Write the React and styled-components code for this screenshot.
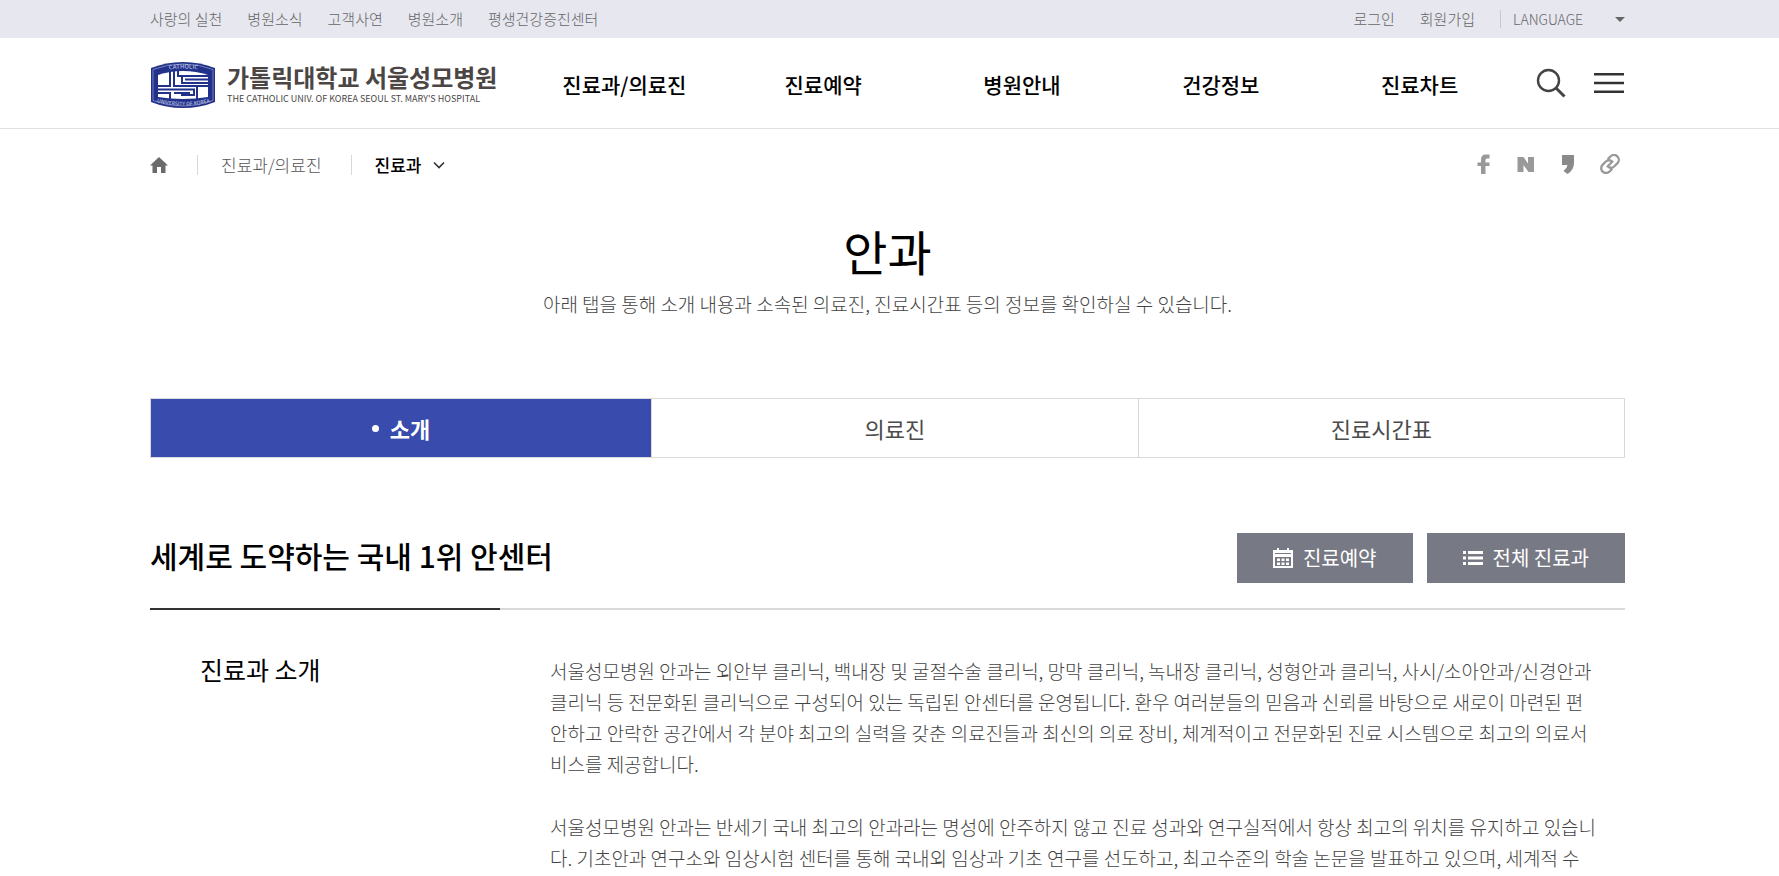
import React from "react";
import styled, { createGlobalStyle } from "styled-components";

const GlobalStyle = createGlobalStyle`
  * {
    box-sizing: border-box;
  }
  body {
    margin: 0;
    background: #fff;
    color: #000;
    font-family: "Noto Sans CJK KR", "Noto Sans", sans-serif;
    font-weight: 300;
  }
  a {
    color: inherit;
    text-decoration: none;
  }
  h1, h2, h3, p, ul {
    margin: 0;
    padding: 0;
  }
  button, select {
    font-family: inherit;
  }
`;

const Inner = styled.div`
  padding: 0 154px 0 150px;
`;

// Top bar
const TopBar = styled.div`
  background-color: #e6e7ef;
`;

const TopRow = styled(Inner)`
  display: flex;
  justify-content: space-between;
  align-items: center;
  height: 38px;
  font-size: 15px;
  line-height: 38px;
  color: #666;
`;

const TopLinks = styled.nav`
  display: flex;
  align-items: center;
  gap: 25px;
`;

const LanguageBox = styled.label`
  display: flex;
  align-items: center;
  height: 18px;
  padding-left: 12px;
  border-left: 1px solid #c8c8cc;
`;

const LanguageSelect = styled.select`
  appearance: none;
  width: 102px;
  padding: 0;
  border: 0;
  background: none;
  color: #666;
  font-size: 14px;
  font-weight: 300;
`;

const Caret = styled.span`
  border: 5px solid transparent;
  border-top-color: #666;
  border-bottom: 0;
`;

// Header
const Header = styled.header`
  border-bottom: 1px solid #e1e1e1;
`;

const HeaderRow = styled(Inner)`
  display: flex;
  align-items: center;
  height: 90px;
`;

const Logo = styled.a`
  display: flex;
  align-items: center;
  gap: 11px;
  flex: 0 0 375px;
  padding-top: 3px;
`;

const LogoText = styled.span`
  display: flex;
  flex-direction: column;
  gap: 2px;
  color: #4b4644;
`;

const LogoName = styled.strong`
  font-size: 24px;
  font-weight: 700;
  line-height: 26px;
  white-space: nowrap;
`;

const LogoSub = styled.span`
  font-size: 9px;
  font-weight: 400;
  line-height: 14px;
  white-space: nowrap;
`;

const MainNav = styled.nav`
  display: flex;
  flex: 1;
  padding-top: 2px;
`;

const NavLink = styled.a`
  flex: 1;
  text-align: center;
  font-size: 21px;
  font-weight: 500;
  line-height: 32px;
  white-space: nowrap;
`;

const Tools = styled.div`
  display: flex;
  align-items: center;
  justify-content: flex-end;
  gap: 28px;
  flex: 0 0 106px;
  padding-right: 1px;
`;

const IconButton = styled.button`
  display: flex;
  padding: 0;
  border: 0;
  background: none;
  cursor: pointer;
`;

// Breadcrumb
const PathRow = styled(Inner)`
  display: flex;
  justify-content: space-between;
  align-items: center;
  height: 72px;
`;

const Path = styled.nav`
  display: flex;
  align-items: center;
  font-size: 17px;
  line-height: 24px;
`;

const PathItem = styled.a`
  display: flex;
  align-items: center;
  gap: 12px;
  color: ${({ $current }) => ($current ? "#000" : "#555")};
  font-weight: ${({ $current }) => ($current ? 500 : 300)};
`;

const Divider = styled.span`
  width: 1px;
  height: 20px;
  margin: 0 23px 0 29px;
  background-color: #d8d8d8;
`;

const Social = styled.div`
  display: flex;
  align-items: center;
  gap: 22px;
  padding: 0 5px 2px 0;
`;

// Title
const TitleBox = styled(Inner)`
  display: flex;
  flex-direction: column;
  align-items: center;
  gap: 2px;
  padding-top: 14px;
  padding-bottom: 77px;
`;

const Title = styled.h1`
  font-size: 48px;
  font-weight: 400;
  line-height: 70px;
`;

const Subtitle = styled.p`
  font-size: 19px;
  line-height: 34px;
  color: #444;
`;

// Tabs
const Tabs = styled.div`
  display: flex;
  height: 60px;
  border: 1px solid #d9d9d9;
`;

const Tab = styled.button`
  display: flex;
  align-items: center;
  justify-content: center;
  gap: 11px;
  flex: ${({ $active }) => ($active ? 34 : 33)} 1 0;
  padding: 0;
  border: 0;
  border-right: 1px solid #d9d9d9;
  background-color: ${({ $active }) => ($active ? "#394bac" : "#fff")};
  color: ${({ $active }) => ($active ? "#fff" : "#4b4b4b")};
  font-size: 22px;
  font-weight: ${({ $active }) => ($active ? 700 : 400)};
  line-height: 32px;
  cursor: pointer;
  &:last-child {
    border-right: 0;
  }
`;

const Dot = styled.span`
  width: 7px;
  height: 7px;
  border-radius: 50%;
  background-color: #fff;
`;

// Section
const SectionHead = styled.div`
  display: flex;
  justify-content: space-between;
  align-items: flex-start;
  padding: 75px 0 25px;
`;

const SectionTitle = styled.h2`
  font-size: 30px;
  font-weight: 500;
  line-height: 44px;
`;

const Buttons = styled.div`
  display: flex;
  gap: 14px;
`;

const GrayButton = styled.button`
  display: flex;
  align-items: center;
  gap: 10px;
  height: 50px;
  padding: 0 36px;
  border: 0;
  background-color: #777984;
  color: #fff;
  font-size: 20px;
  font-weight: 400;
  line-height: 28px;
  cursor: pointer;
`;

const Line = styled.div`
  height: 2px;
  background-color: #d9d9d9;
`;

const LineAccent = styled.div`
  width: 350px;
  height: 2px;
  background-color: #333;
`;

const Article = styled.section`
  display: flex;
  padding-top: 45px;
`;

const ArticleTitle = styled.h3`
  flex: 0 0 400px;
  padding-left: 50px;
  font-size: 25px;
  font-weight: 400;
  line-height: 29px;
`;

const ArticleBody = styled.div`
  display: flex;
  flex-direction: column;
  flex: 1;
  gap: 32px;
  padding-right: 28px;
  font-size: 19px;
  line-height: 31px;
  color: #444;
`;

const PageClip = styled.div`
  height: 100vh;
  overflow: hidden;
`;

const topLinks = ["사랑의 실천", "병원소식", "고객사연", "병원소개", "평생건강증진센터"];
const navLinks = ["진료과/의료진", "진료예약", "병원안내", "건강정보", "진료차트"];
const tabs = ["소개", "의료진", "진료시간표"];
const paragraphs = [
  "서울성모병원 안과는 외안부 클리닉, 백내장 및 굴절수술 클리닉, 망막 클리닉, 녹내장 클리닉, 성형안과 클리닉, 사시/소아안과/신경안과 클리닉 등 전문화된 클리닉으로 구성되어 있는 독립된 안센터를 운영됩니다. 환우 여러분들의 믿음과 신뢰를 바탕으로 새로이 마련된 편안하고 안락한 공간에서 각 분야 최고의 실력을 갖춘 의료진들과 최신의 의료 장비, 체계적이고 전문화된 진료 시스템으로 최고의 의료서비스를 제공합니다.",
  "서울성모병원 안과는 반세기 국내 최고의 안과라는 명성에 안주하지 않고 진료 성과와 연구실적에서 항상 최고의 위치를 유지하고 있습니다. 기초안과 연구소와 임상시험 센터를 통해 국내외 임상과 기초 연구를 선도하고, 최고수준의 학술 논문을 발표하고 있으며, 세계적 수",
];

function Emblem() {
  return (
    <svg width="66" height="48" viewBox="0 0 66 48" aria-hidden="true">
      <path d="M1 7Q16 1 33 1T65 7V41Q50 47 33 47T1 41Z" fill="#22318a" />
      <path d="M3 8.500Q17 3 33 3T63 8.500V39.500Q49 45 33 45T3 39.500Z" fill="none" stroke="#8d96c8" strokeWidth="0.8" />
      <path d="M8 14Q20 10 33 10T58 14V36Q46 38 33 38T8 36Z" fill="#fff" />
      <g fill="none" stroke="#22318a" strokeWidth="2">
        <path d="M20 10V25H8" />
        <path d="M24 10V25H58" />
        <path d="M28 10V15H58M32 15V22H58M35 18.500H58" />
        <path d="M8 28.500H44V34H31M24 32H40M8 32H20V38" />
        <path d="M47 25V38" />
      </g>
      <defs>
        <path id="emblemTop" d="M10 10Q33 5 57 10" />
        <path id="emblemBottom" d="M6 41Q33 48 61 41" />
      </defs>
      <g fill="#b9c0e2" fontWeight="500">
        <text textAnchor="middle" fontSize="6"><textPath href="#emblemTop" startOffset="50%">CATHOLIC</textPath></text>
        <text textAnchor="middle" fontSize="5"><textPath href="#emblemBottom" startOffset="50%">UNIVERSITY OF KOREA</textPath></text>
      </g>
    </svg>
  );
}

function App() {
  return (
    <PageClip>
      <GlobalStyle />
      <TopBar>
        <TopRow>
          <TopLinks>
            {topLinks.map((t) => <a href="#" key={t}>{t}</a>)}
          </TopLinks>
          <TopLinks>
            <a href="#">로그인</a>
            <a href="#">회원가입</a>
            <LanguageBox>
              <LanguageSelect aria-label="LANGUAGE">
                <option>LANGUAGE</option>
              </LanguageSelect>
              <Caret />
            </LanguageBox>
          </TopLinks>
        </TopRow>
      </TopBar>

      <Header>
        <HeaderRow>
          <Logo href="#">
            <Emblem />
            <LogoText>
              <LogoName>가톨릭대학교 서울성모병원</LogoName>
              <LogoSub>THE CATHOLIC UNIV. OF KOREA SEOUL ST. MARY'S HOSPITAL</LogoSub>
            </LogoText>
          </Logo>
          <MainNav>
            {navLinks.map((t) => <NavLink href="#" key={t}>{t}</NavLink>)}
          </MainNav>
          <Tools>
            <IconButton type="button" aria-label="검색">
              <svg width="30" height="30" viewBox="0 0 30 30" fill="none" stroke="#444" strokeWidth="2.4">
                <circle cx="12.5" cy="12.5" r="10.5" />
                <path d="M20 20L28.5 28.5" strokeWidth="3" />
              </svg>
            </IconButton>
            <IconButton type="button" aria-label="메뉴">
              <svg width="30" height="24" viewBox="0 0 30 24" fill="#333">
                <path d="M0 2h30v2.5H0zM0 10.7h30v2.5H0zM0 19.4h30v2.5H0z" />
              </svg>
            </IconButton>
          </Tools>
        </HeaderRow>
      </Header>

      <PathRow>
        <Path>
          <PathItem href="#" aria-label="홈">
            <svg width="18" height="16" viewBox="0 0 18 16" fill="#6b6b6b">
              <path d="M9 0L18 8.6H15.5V16H11V10H7V16H2.500V8.600H0Z" />
            </svg>
          </PathItem>
          <Divider />
          <PathItem href="#">진료과/의료진</PathItem>
          <Divider />
          <PathItem href="#" $current>
            진료과
            <svg width="12" height="8" viewBox="0 0 12 8" fill="none" stroke="#333" strokeWidth="1.6">
              <path d="M1 1.500L6 6.500L11 1.500" />
            </svg>
          </PathItem>
        </Path>
        <Social>
          <IconButton type="button" aria-label="페이스북">
            <svg width="20" height="20" viewBox="0 0 20 20" fill="#999">
              <path d="M7 20V12H3.500V8.500H7V5.500Q7 .5 12 .5H15.500V4.500H13Q11.500 4.500 11.500 6V8.500H15.500V12H11.500V20Z" />
            </svg>
          </IconButton>
          <IconButton type="button" aria-label="네이버">
            <svg width="20" height="20" viewBox="0 0 20 20" fill="#999">
              <path d="M1.500 3H7.500L12 9.500V3H18V18H12.500L7.500 11V18H1.500Z" />
            </svg>
          </IconButton>
          <IconButton type="button" aria-label="카카오스토리">
            <svg width="20" height="20" viewBox="0 0 20 20" fill="#8a8a8a">
              <path d="M4 1H16V9Q16 16 9.500 20L5.500 17Q9 14.500 9.500 11H4Z" />
            </svg>
          </IconButton>
          <IconButton type="button" aria-label="링크 복사">
            <svg width="20" height="20" viewBox="0 0 24 24" fill="none" stroke="#999" strokeWidth="2.8" strokeLinecap="round">
              <path d="M10 5.500L12.500 3A5.500 5.500 0 0 1 21 11L17 15A5.500 5.500 0 0 1 11 16" />
              <path d="M14 18.500L11.500 21A5.500 5.500 0 0 1 3 13L7 9A5.500 5.500 0 0 1 13 8" />
              <path d="M9 15L15 9" />
            </svg>
          </IconButton>
        </Social>
      </PathRow>

      <TitleBox>
        <Title>안과</Title>
        <Subtitle>아래 탭을 통해 소개 내용과 소속된 의료진, 진료시간표 등의 정보를 확인하실 수 있습니다.</Subtitle>
      </TitleBox>

      <Inner>
        <Tabs role="tablist">
          {tabs.map((t, i) => (
            <Tab type="button" role="tab" aria-selected={i === 0} $active={i === 0} key={t}>
              {i === 0 && <Dot />}
              {t}
            </Tab>
          ))}
        </Tabs>

        <SectionHead>
          <SectionTitle>세계로 도약하는 국내 1위 안센터</SectionTitle>
          <Buttons>
            <GrayButton type="button">
              <svg width="20" height="20" viewBox="0 0 20 20" aria-hidden="true">
                <path d="M0 2H4V0H6V2H14V0H16V2H20V20H0Z" fill="#fff" />
                <path d="M2 5.500H18" stroke="#777984" />
                <path d="M2 9H18V18H2Z" fill="#777984" />
                <path d="M4 10.500h3v2.500H4zM8.500 10.500h3v2.500h-3zM13 10.500h3v2.500h-3zM4 14.500h3V17H4zM8.500 14.500h3V17h-3zM13 14.500h3V17h-3z" fill="#fff" />
              </svg>
              진료예약
            </GrayButton>
            <GrayButton type="button">
              <svg width="20" height="14" viewBox="0 0 20 14" fill="#fff" aria-hidden="true">
                <path d="M0 0h3v3H0zM5 0h15v3H5zM0 5.500h3v3H0zM5 5.500h15v3H5zM0 11h3v3H0zM5 11h15v3H5z" />
              </svg>
              전체 진료과
            </GrayButton>
          </Buttons>
        </SectionHead>
        <Line>
          <LineAccent />
        </Line>

        <Article>
          <ArticleTitle>진료과 소개</ArticleTitle>
          <ArticleBody>
            {paragraphs.map((p) => <p key={p}>{p}</p>)}
          </ArticleBody>
        </Article>
      </Inner>
    </PageClip>
  );
}

export default App;
